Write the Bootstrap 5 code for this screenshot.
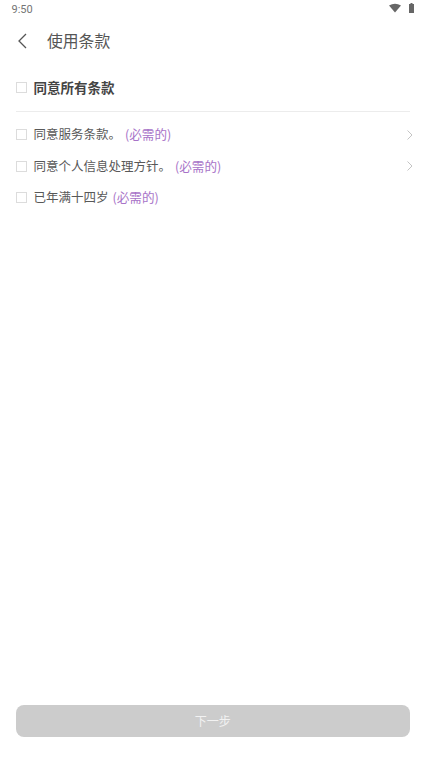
<!DOCTYPE html>
<html lang="zh">
<head>
<meta charset="utf-8">
<meta name="viewport" content="width=device-width, initial-scale=1">
<link rel="stylesheet" href="https://cdn.jsdelivr.net/npm/bootstrap@5.3.0/dist/css/bootstrap.min.css">
<style>
html,body{height:759px;overflow:hidden;background:#fff}
body{font-family:"Noto Sans CJK SC","Roboto",sans-serif;color:#444}
.screen{height:759px}
.status-row{height:19px;padding:3px 12px 0 11.5px;font:11px/13px Roboto,sans-serif;color:#757575}
.title-row{height:43px;padding-left:17px}
.title-row h1{font-size:15.8px;font-weight:400;color:#555;margin:0 0 0 20px;line-height:24px}
.terms{padding:0 16px 0 15.5px}
.all-row{height:48px;margin-top:2px;font-size:13.5px;font-weight:700;color:#444;border-bottom:1px solid #ececec}
.term-row{height:31.5px;font-size:12.5px;font-weight:400;color:#585858}
.first-term{margin-top:7px}
.box{width:11px;height:11px;border:1px solid #dcdcdc;margin-right:7px;flex:none}
.need{color:#a873c8;font-size:12.6px}
.gap-note{margin-left:4px}
.arrow{margin-right:-3px}
.next-wrap{padding:0 16px 22px 15.5px}
.next-btn{height:32px;background:#ccc;border:0;border-radius:8px;color:#f2f2f2;font-size:12px;width:100%;padding:0}
.next-btn:disabled{background:#ccc;color:#f2f2f2;opacity:1}
</style>
</head>
<body>
<div class="screen d-flex flex-column">
  <div class="status-row d-flex justify-content-between">
    <span>9:50</span>
    <span class="d-flex align-items-start gap-2">
      <svg width="12" height="10" viewBox="0 0 12 10"><path d="M0 2.5Q6-1 12 2.5L6 9.5Z" fill="#666"/></svg>
      <svg width="5" height="10" viewBox="0 0 5 10"><path d="M1.5 0H3.5V1H5V10H0V1H1.5Z" fill="#666"/></svg>
    </span>
  </div>
  <div class="title-row d-flex align-items-center">
    <svg width="10" height="16" viewBox="0 0 10 16"><path d="M9 1L2 8L9 15" fill="none" stroke="#555" stroke-width="1.3"/></svg>
    <h1>使用条款</h1>
  </div>
  <div class="terms flex-grow-1">
    <div class="all-row d-flex align-items-center"><span class="box"></span>同意所有条款</div>
    <div class="term-row first-term d-flex align-items-center">
      <span class="box"></span><span>同意服务条款。</span><span class="need gap-note">(必需的)</span>
      <svg class="ms-auto arrow" width="6" height="10" viewBox="0 0 6 10"><path d="M0.5 0.5L5 5L0.5 9.5" fill="none" stroke="#c4c4c4" stroke-width="1"/></svg>
    </div>
    <div class="term-row d-flex align-items-center">
      <span class="box"></span><span>同意个人信息处理方针。</span><span class="need gap-note">(必需的)</span>
      <svg class="ms-auto arrow" width="6" height="10" viewBox="0 0 6 10"><path d="M0.5 0.5L5 5L0.5 9.5" fill="none" stroke="#c4c4c4" stroke-width="1"/></svg>
    </div>
    <div class="term-row d-flex align-items-center">
      <span class="box"></span><span>已年满十四岁</span><span class="need gap-note">(必需的)</span>
    </div>
  </div>
  <div class="next-wrap"><button class="btn next-btn" disabled>下一步</button></div>
</div>
<script src="https://cdn.jsdelivr.net/npm/bootstrap@5.3.0/dist/js/bootstrap.bundle.min.js"></script>
</body>
</html>
